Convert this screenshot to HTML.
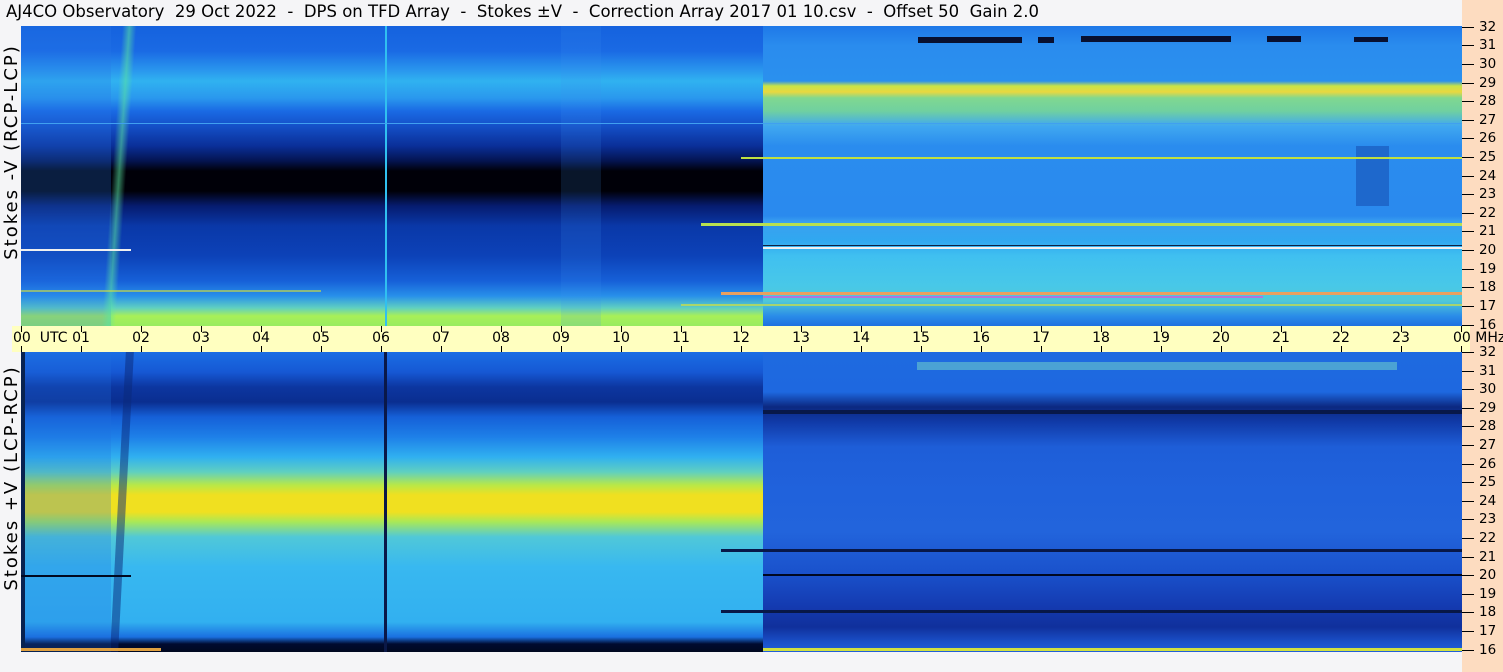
<!DOCTYPE html>
<html><head><meta charset="utf-8"><style>
*{margin:0;padding:0;box-sizing:border-box}
body{width:1503px;height:672px;background:#f5f5f7;position:relative;overflow:hidden;font-family:"DejaVu Sans","Liberation Sans",sans-serif;color:#000}
.a{position:absolute}
.title{left:6px;top:2px;font-size:16.5px;white-space:pre}
.right{left:1462px;top:0;width:41px;height:672px;background:#fddcc0}
.plot{position:absolute;left:21px;width:1441px;height:300px;overflow:hidden}
.p1{top:26px}.p2{top:352px}
.band{left:12px;top:326px;width:1458px;height:26px;background:#ffffc0}
.tk{position:absolute;width:1px;height:6px;background:#000}
.tl{position:absolute;top:330px;font-size:14px;width:30px;text-align:center;margin-left:-15px}
.ft{position:absolute;left:1462px;width:12px;height:1px;background:#000}
.fl{position:absolute;left:1479px;font-size:13.5px;line-height:16px}
.side{position:absolute;font-size:18px;letter-spacing:2px;line-height:22px;height:22px;white-space:nowrap;transform:rotate(-90deg);transform-origin:center}
.s{position:absolute;height:2px}
</style></head><body>
<div class="a title">AJ4CO Observatory  29 Oct 2022  -  DPS on TFD Array  -  Stokes ±V  -  Correction Array 2017 01 10.csv  -  Offset 50  Gain 2.0</div>
<div class="a right"></div>

<!-- Plot 1 -->
<div class="plot p1">
 <div class="a" style="left:0;top:0;width:742px;height:300px;background:linear-gradient(#1562de 0,#1a6ae4 25px,#2a98ee 45px,#30b2f0 55px,#2a98ee 72px,#1a6ae4 85px,#1450c8 100px,#0a2f98 120px,#041450 135px,#000008 145px,#000008 165px,#061c70 180px,#0a38a8 200px,#0c42b8 230px,#1660d8 255px,#2890ea 270px,#60d0c0 282px,#a8f058 290px,#98ec60 300px)"></div>
 <div class="a" style="left:742px;top:0;width:699px;height:300px;background:linear-gradient(#1e78e8 0,#2a8cee 20px,#2a90ee 55px,#c8e448 60px,#e8d840 66px,#80d890 72px,#70d0a0 85px,#40a8f0 100px,#2a8cee 120px,#2a8aee 190px,#3aa0f0 196px,#30a8f0 215px,#40c0f0 230px,#48c8e8 260px,#50c8d8 275px,#2a8ce8 290px,#1e70e0 300px)"></div>
 <div class="a" style="left:0;top:0;width:90px;height:300px;background:rgba(40,120,230,0.25)"></div>
 <div class="a" style="left:91px;top:0;width:14px;height:300px;background:linear-gradient(90deg,transparent,rgba(90,230,160,0.55),transparent);transform:skewX(-4deg)"></div>
 <div class="a" style="left:364px;top:0;width:2px;height:300px;background:#30c0f0"></div>
 <div class="a" style="left:540px;top:0;width:40px;height:300px;background:rgba(60,150,240,0.15)"></div>
 <div class="a" style="left:1335px;top:120px;width:33px;height:60px;background:rgba(10,40,140,0.35)"></div>
 <div class="s" style="left:897px;top:11px;width:104px;height:6px;background:#081030"></div>
 <div class="s" style="left:1017px;top:11px;width:16px;height:6px;background:#081030"></div>
 <div class="s" style="left:1060px;top:10px;width:150px;height:6px;background:#081030"></div>
 <div class="s" style="left:1246px;top:10px;width:34px;height:6px;background:#081030"></div>
 <div class="s" style="left:1333px;top:11px;width:34px;height:5px;background:#081030"></div>
 <div class="s" style="left:720px;top:131px;width:721px;background:#c0e040"></div>
 <div class="s" style="left:680px;top:197px;width:761px;height:3px;background:#b8e050"></div>
 <div class="s" style="left:742px;top:221px;width:699px;background:#f0f0f0"></div>
 <div class="s" style="left:742px;top:219px;width:699px;height:1px;background:#102040"></div>
 <div class="s" style="left:0;top:223px;width:110px;background:#f0f0f0"></div>
 <div class="s" style="left:700px;top:266px;width:741px;height:3px;background:#e8a060"></div>
 <div class="s" style="left:742px;top:270px;width:500px;background:#f040e0;opacity:.6"></div>
 <div class="s" style="left:0;top:264px;width:300px;background:#d0e040;opacity:.6"></div>
 <div class="s" style="left:660px;top:278px;width:781px;background:#d0e040;opacity:.7"></div>
 <div class="s" style="left:0;top:97px;width:1441px;height:1px;background:#40a0f0"></div>
</div>

<!-- Plot 2 -->
<div class="plot p2">
 <div class="a" style="left:0;top:0;width:742px;height:300px;background:linear-gradient(#1a6ee4 0,#1658d4 20px,#0c36a0 35px,#0a2e90 50px,#1560d8 65px,#1e80e8 85px,#30b0f0 105px,#60d0c0 120px,#b8e848 133px,#f0e020 143px,#f0e020 160px,#a8e858 170px,#50c8d8 185px,#38b8f0 215px,#32b0f0 270px,#1a70e0 285px,#000a30 292px,#000820 300px)"></div>
 <div class="a" style="left:742px;top:0;width:699px;height:300px;background:linear-gradient(#1e6ae0 0,#1e68e0 40px,#0c2880 55px,#103aa8 70px,#1e5ed8 95px,#2062dc 140px,#2264dc 180px,#1a52cc 220px,#143ab0 255px,#10309c 275px,#1a50c8 290px,#2060d8 300px)"></div>
 <div class="a" style="left:0;top:0;width:4px;height:300px;background:#000820"></div>
 <div class="a" style="left:0;top:0;width:90px;height:300px;background:rgba(30,110,225,0.25)"></div>
 <div class="a" style="left:97px;top:0;width:8px;height:300px;background:rgba(10,40,120,0.5);transform:skewX(-3deg)"></div>
 <div class="a" style="left:363px;top:0;width:3px;height:300px;background:#0a1848"></div>
 <div class="a" style="left:896px;top:10px;width:480px;height:8px;background:rgba(120,220,200,0.5)"></div>
 <div class="s" style="left:742px;top:58px;width:699px;height:4px;background:#081848"></div>
 <div class="s" style="left:700px;top:197px;width:741px;height:3px;background:#081848"></div>
 <div class="s" style="left:742px;top:222px;width:699px;background:#000820"></div>
 <div class="s" style="left:0;top:223px;width:110px;background:#000820"></div>
 <div class="s" style="left:700px;top:258px;width:741px;height:3px;background:#081848"></div>
 <div class="s" style="left:742px;top:296px;width:699px;height:3px;background:#d0e040"></div>
 <div class="s" style="left:0;top:296px;width:140px;height:3px;background:#e0a040"></div>
</div>

<div class="a band"></div>
<div class="a" style="left:0;top:0">
<div class="tk" style="left:21px;top:326px"></div><div class="tk" style="left:21px;top:346px"></div>
<div class="tk" style="left:81px;top:326px"></div><div class="tk" style="left:81px;top:346px"></div>
<div class="tk" style="left:141px;top:326px"></div><div class="tk" style="left:141px;top:346px"></div>
<div class="tk" style="left:201px;top:326px"></div><div class="tk" style="left:201px;top:346px"></div>
<div class="tk" style="left:261px;top:326px"></div><div class="tk" style="left:261px;top:346px"></div>
<div class="tk" style="left:321px;top:326px"></div><div class="tk" style="left:321px;top:346px"></div>
<div class="tk" style="left:381px;top:326px"></div><div class="tk" style="left:381px;top:346px"></div>
<div class="tk" style="left:441px;top:326px"></div><div class="tk" style="left:441px;top:346px"></div>
<div class="tk" style="left:501px;top:326px"></div><div class="tk" style="left:501px;top:346px"></div>
<div class="tk" style="left:561px;top:326px"></div><div class="tk" style="left:561px;top:346px"></div>
<div class="tk" style="left:621px;top:326px"></div><div class="tk" style="left:621px;top:346px"></div>
<div class="tk" style="left:681px;top:326px"></div><div class="tk" style="left:681px;top:346px"></div>
<div class="tk" style="left:741px;top:326px"></div><div class="tk" style="left:741px;top:346px"></div>
<div class="tk" style="left:801px;top:326px"></div><div class="tk" style="left:801px;top:346px"></div>
<div class="tk" style="left:861px;top:326px"></div><div class="tk" style="left:861px;top:346px"></div>
<div class="tk" style="left:921px;top:326px"></div><div class="tk" style="left:921px;top:346px"></div>
<div class="tk" style="left:981px;top:326px"></div><div class="tk" style="left:981px;top:346px"></div>
<div class="tk" style="left:1041px;top:326px"></div><div class="tk" style="left:1041px;top:346px"></div>
<div class="tk" style="left:1101px;top:326px"></div><div class="tk" style="left:1101px;top:346px"></div>
<div class="tk" style="left:1161px;top:326px"></div><div class="tk" style="left:1161px;top:346px"></div>
<div class="tk" style="left:1221px;top:326px"></div><div class="tk" style="left:1221px;top:346px"></div>
<div class="tk" style="left:1281px;top:326px"></div><div class="tk" style="left:1281px;top:346px"></div>
<div class="tk" style="left:1341px;top:326px"></div><div class="tk" style="left:1341px;top:346px"></div>
<div class="tk" style="left:1401px;top:326px"></div><div class="tk" style="left:1401px;top:346px"></div>
<div class="tk" style="left:1461px;top:326px"></div><div class="tk" style="left:1461px;top:346px"></div>
</div>
<div class="a" style="left:13px;top:330px;font-size:14px;white-space:pre">00  UTC</div>
<div class="tl" style="left:81px">01</div><div class="tl" style="left:141px">02</div><div class="tl" style="left:201px">03</div>
<div class="tl" style="left:261px">04</div><div class="tl" style="left:321px">05</div><div class="tl" style="left:381px">06</div>
<div class="tl" style="left:441px">07</div><div class="tl" style="left:501px">08</div><div class="tl" style="left:561px">09</div>
<div class="tl" style="left:621px">10</div><div class="tl" style="left:681px">11</div><div class="tl" style="left:741px">12</div>
<div class="tl" style="left:801px">13</div><div class="tl" style="left:861px">14</div><div class="tl" style="left:921px">15</div>
<div class="tl" style="left:981px">16</div><div class="tl" style="left:1041px">17</div><div class="tl" style="left:1101px">18</div>
<div class="tl" style="left:1161px">19</div><div class="tl" style="left:1221px">20</div><div class="tl" style="left:1281px">21</div>
<div class="tl" style="left:1341px">22</div><div class="tl" style="left:1401px">23</div>
<div class="a" style="left:1453px;top:330px;font-size:14px;white-space:pre">00 MHz</div>

<div class="ft" style="top:27px"></div><div class="fl" style="top:19px">32</div>
<div class="ft" style="top:45px"></div><div class="fl" style="top:37px">31</div>
<div class="ft" style="top:64px"></div><div class="fl" style="top:56px">30</div>
<div class="ft" style="top:83px"></div><div class="fl" style="top:75px">29</div>
<div class="ft" style="top:101px"></div><div class="fl" style="top:93px">28</div>
<div class="ft" style="top:120px"></div><div class="fl" style="top:112px">27</div>
<div class="ft" style="top:138px"></div><div class="fl" style="top:130px">26</div>
<div class="ft" style="top:157px"></div><div class="fl" style="top:149px">25</div>
<div class="ft" style="top:176px"></div><div class="fl" style="top:168px">24</div>
<div class="ft" style="top:194px"></div><div class="fl" style="top:186px">23</div>
<div class="ft" style="top:213px"></div><div class="fl" style="top:205px">22</div>
<div class="ft" style="top:231px"></div><div class="fl" style="top:223px">21</div>
<div class="ft" style="top:250px"></div><div class="fl" style="top:242px">20</div>
<div class="ft" style="top:269px"></div><div class="fl" style="top:261px">19</div>
<div class="ft" style="top:287px"></div><div class="fl" style="top:279px">18</div>
<div class="ft" style="top:306px"></div><div class="fl" style="top:298px">17</div>
<div class="ft" style="top:325px"></div><div class="fl" style="top:317px">16</div>
<div class="ft" style="top:352px"></div><div class="fl" style="top:344px">32</div>
<div class="ft" style="top:371px"></div><div class="fl" style="top:363px">31</div>
<div class="ft" style="top:389px"></div><div class="fl" style="top:381px">30</div>
<div class="ft" style="top:408px"></div><div class="fl" style="top:400px">29</div>
<div class="ft" style="top:426px"></div><div class="fl" style="top:418px">28</div>
<div class="ft" style="top:445px"></div><div class="fl" style="top:437px">27</div>
<div class="ft" style="top:464px"></div><div class="fl" style="top:456px">26</div>
<div class="ft" style="top:482px"></div><div class="fl" style="top:474px">25</div>
<div class="ft" style="top:501px"></div><div class="fl" style="top:493px">24</div>
<div class="ft" style="top:519px"></div><div class="fl" style="top:511px">23</div>
<div class="ft" style="top:538px"></div><div class="fl" style="top:530px">22</div>
<div class="ft" style="top:557px"></div><div class="fl" style="top:549px">21</div>
<div class="ft" style="top:575px"></div><div class="fl" style="top:567px">20</div>
<div class="ft" style="top:594px"></div><div class="fl" style="top:586px">19</div>
<div class="ft" style="top:612px"></div><div class="fl" style="top:604px">18</div>
<div class="ft" style="top:631px"></div><div class="fl" style="top:623px">17</div>
<div class="ft" style="top:650px"></div><div class="fl" style="top:642px">16</div>

<div class="side" style="left:-138px;top:141px;width:300px;text-align:center">Stokes -V (RCP-LCP)</div>
<div class="side" style="left:-138px;top:467px;width:300px;text-align:center">Stokes +V (LCP-RCP)</div>
</body></html>
